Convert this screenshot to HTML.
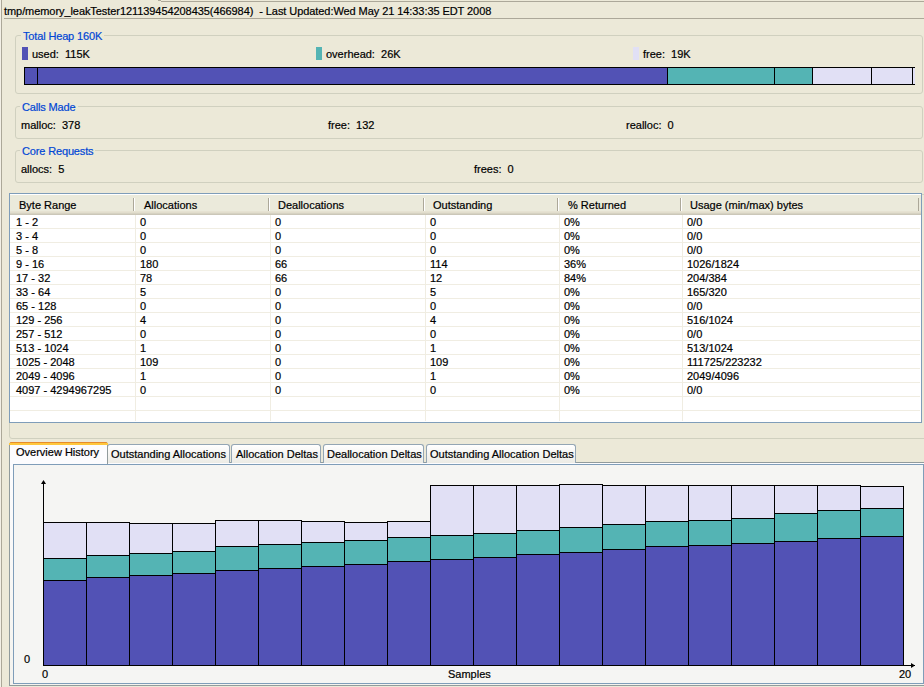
<!DOCTYPE html>
<html><head><meta charset="utf-8"><style>
html,body{margin:0;padding:0}
body{width:924px;height:687px;overflow:hidden;position:relative;background:#ECE9D8;font-family:"Liberation Sans",sans-serif;font-size:11px;color:#000}
div,span,svg{position:absolute}
.t{white-space:pre;line-height:13px;-webkit-text-stroke:0.2px currentColor}
.gb{border:1px solid #D0D0BF;border-radius:3px}
.gt{color:#0046D5;background:#ECE9D8;padding:0 2px;margin-left:-2px;letter-spacing:-0.15px}
</style></head><body>
<div style="left:0px;top:0px;width:1px;height:687px;background:#F3F0E6"></div><div style="left:1px;top:0px;width:1px;height:687px;background:#ACA899"></div><div style="left:158px;top:0px;width:3px;height:1px;background:#ACA899"></div><div style="left:161px;top:1px;width:763px;height:1px;background:#ACA899"></div><span class="t" style="left:4px;top:5px;letter-spacing:-0.07px">tmp/memory_leakTester121139454208435(466984)&nbsp; - Last Updated:Wed May 21 14:33:35 EDT 2008</span><div style="left:4px;top:18px;width:920px;height:1px;background:#ACA899"></div><div class="gb" style="left:15px;top:35px;width:906px;height:57px"></div><span class="t gt" style="left:23px;top:30px">Total Heap 160K</span><div style="left:22px;top:47px;width:6px;height:13px;background:#5252B5"></div><span class="t" style="left:32px;top:48px;">used:&nbsp; 115K</span><div style="left:316px;top:47px;width:6px;height:13px;background:#54B4B4"></div><span class="t" style="left:326px;top:48px;">overhead:&nbsp; 26K</span><div style="left:633px;top:47px;width:6px;height:13px;background:#E1E0F5"></div><span class="t" style="left:643px;top:48px;">free:&nbsp; 19K</span><div style="left:24px;top:67px;width:890px;height:16px;border:1px solid #000;border-right:none;background:#E1E0F5"></div><div style="left:25px;top:68px;width:642px;height:16px;background:#5252B5"></div><div style="left:668px;top:68px;width:144px;height:16px;background:#54B4B4"></div><div style="left:37px;top:67px;width:1px;height:18px;background:#000"></div><div style="left:667px;top:67px;width:1px;height:18px;background:#000"></div><div style="left:774px;top:67px;width:1px;height:18px;background:#000"></div><div style="left:812px;top:67px;width:1px;height:18px;background:#000"></div><div style="left:871px;top:67px;width:1px;height:18px;background:#000"></div><div style="left:912px;top:67px;width:1px;height:18px;background:#000"></div><div class="gb" style="left:15px;top:106px;width:906px;height:31px"></div><span class="t gt" style="left:22px;top:101px">Calls Made</span><span class="t" style="left:21px;top:119px;">malloc:&nbsp; 378</span><span class="t" style="left:328px;top:119px;">free:&nbsp; 132</span><span class="t" style="left:626px;top:119px;">realloc:&nbsp; 0</span><div class="gb" style="left:15px;top:150px;width:906px;height:31px"></div><span class="t gt" style="left:22px;top:145px">Core Requests</span><span class="t" style="left:21px;top:163px;">allocs:&nbsp; 5</span><span class="t" style="left:474px;top:163px;">frees:&nbsp; 0</span><div class="gb" style="left:9px;top:194px;width:940px;height:243px"></div><div style="left:9px;top:193px;width:911px;height:228px;border:1px solid #7F9DB9;background:#fff"></div><div style="left:10px;top:194px;width:911px;height:1px;background:#fff"></div><div style="left:10px;top:195px;width:911px;height:16px;background:#EBEADB"></div><div style="left:10px;top:211px;width:911px;height:1px;background:#E6E2D2"></div><div style="left:10px;top:212px;width:911px;height:1px;background:#E2DECD"></div><div style="left:10px;top:213px;width:911px;height:1px;background:#D6D2C2"></div><div style="left:10px;top:214px;width:911px;height:1px;background:#CBC7B8"></div><span class="t" style="left:19px;top:199px;">Byte Range</span><div style="left:133px;top:198px;width:1px;height:13px;background:#ACA899"></div><div style="left:134px;top:198px;width:1px;height:13px;background:#fff"></div><div style="left:135px;top:215px;width:1px;height:206px;background:#F0EDE2"></div><span class="t" style="left:144px;top:199px;">Allocations</span><div style="left:268px;top:198px;width:1px;height:13px;background:#ACA899"></div><div style="left:269px;top:198px;width:1px;height:13px;background:#fff"></div><div style="left:270px;top:215px;width:1px;height:206px;background:#F0EDE2"></div><span class="t" style="left:278px;top:199px;">Deallocations</span><div style="left:423px;top:198px;width:1px;height:13px;background:#ACA899"></div><div style="left:424px;top:198px;width:1px;height:13px;background:#fff"></div><div style="left:425px;top:215px;width:1px;height:206px;background:#F0EDE2"></div><span class="t" style="left:433px;top:199px;">Outstanding</span><div style="left:557px;top:198px;width:1px;height:13px;background:#ACA899"></div><div style="left:558px;top:198px;width:1px;height:13px;background:#fff"></div><div style="left:559px;top:215px;width:1px;height:206px;background:#F0EDE2"></div><span class="t" style="left:568px;top:199px;">% Returned</span><div style="left:680px;top:198px;width:1px;height:13px;background:#ACA899"></div><div style="left:681px;top:198px;width:1px;height:13px;background:#fff"></div><div style="left:682px;top:215px;width:1px;height:206px;background:#F0EDE2"></div><span class="t" style="left:690px;top:199px;">Usage (min/max) bytes</span><div style="left:918px;top:198px;width:1px;height:13px;background:#ACA899"></div><div style="left:10px;top:228px;width:910px;height:1px;background:#F0EDE2"></div><div style="left:10px;top:242px;width:910px;height:1px;background:#F0EDE2"></div><div style="left:10px;top:256px;width:910px;height:1px;background:#F0EDE2"></div><div style="left:10px;top:270px;width:910px;height:1px;background:#F0EDE2"></div><div style="left:10px;top:284px;width:910px;height:1px;background:#F0EDE2"></div><div style="left:10px;top:298px;width:910px;height:1px;background:#F0EDE2"></div><div style="left:10px;top:312px;width:910px;height:1px;background:#F0EDE2"></div><div style="left:10px;top:326px;width:910px;height:1px;background:#F0EDE2"></div><div style="left:10px;top:340px;width:910px;height:1px;background:#F0EDE2"></div><div style="left:10px;top:354px;width:910px;height:1px;background:#F0EDE2"></div><div style="left:10px;top:368px;width:910px;height:1px;background:#F0EDE2"></div><div style="left:10px;top:382px;width:910px;height:1px;background:#F0EDE2"></div><div style="left:10px;top:396px;width:910px;height:1px;background:#F0EDE2"></div><div style="left:10px;top:410px;width:910px;height:1px;background:#F0EDE2"></div><span class="t" style="left:16px;top:216px;">1 - 2</span><span class="t" style="left:140px;top:216px;">0</span><span class="t" style="left:275px;top:216px;">0</span><span class="t" style="left:430px;top:216px;">0</span><span class="t" style="left:564px;top:216px;">0%</span><span class="t" style="left:687px;top:216px;">0/0</span><span class="t" style="left:16px;top:230px;">3 - 4</span><span class="t" style="left:140px;top:230px;">0</span><span class="t" style="left:275px;top:230px;">0</span><span class="t" style="left:430px;top:230px;">0</span><span class="t" style="left:564px;top:230px;">0%</span><span class="t" style="left:687px;top:230px;">0/0</span><span class="t" style="left:16px;top:244px;">5 - 8</span><span class="t" style="left:140px;top:244px;">0</span><span class="t" style="left:275px;top:244px;">0</span><span class="t" style="left:430px;top:244px;">0</span><span class="t" style="left:564px;top:244px;">0%</span><span class="t" style="left:687px;top:244px;">0/0</span><span class="t" style="left:16px;top:258px;">9 - 16</span><span class="t" style="left:140px;top:258px;">180</span><span class="t" style="left:275px;top:258px;">66</span><span class="t" style="left:430px;top:258px;">114</span><span class="t" style="left:564px;top:258px;">36%</span><span class="t" style="left:687px;top:258px;">1026/1824</span><span class="t" style="left:16px;top:272px;">17 - 32</span><span class="t" style="left:140px;top:272px;">78</span><span class="t" style="left:275px;top:272px;">66</span><span class="t" style="left:430px;top:272px;">12</span><span class="t" style="left:564px;top:272px;">84%</span><span class="t" style="left:687px;top:272px;">204/384</span><span class="t" style="left:16px;top:286px;">33 - 64</span><span class="t" style="left:140px;top:286px;">5</span><span class="t" style="left:275px;top:286px;">0</span><span class="t" style="left:430px;top:286px;">5</span><span class="t" style="left:564px;top:286px;">0%</span><span class="t" style="left:687px;top:286px;">165/320</span><span class="t" style="left:16px;top:300px;">65 - 128</span><span class="t" style="left:140px;top:300px;">0</span><span class="t" style="left:275px;top:300px;">0</span><span class="t" style="left:430px;top:300px;">0</span><span class="t" style="left:564px;top:300px;">0%</span><span class="t" style="left:687px;top:300px;">0/0</span><span class="t" style="left:16px;top:314px;">129 - 256</span><span class="t" style="left:140px;top:314px;">4</span><span class="t" style="left:275px;top:314px;">0</span><span class="t" style="left:430px;top:314px;">4</span><span class="t" style="left:564px;top:314px;">0%</span><span class="t" style="left:687px;top:314px;">516/1024</span><span class="t" style="left:16px;top:328px;">257 - 512</span><span class="t" style="left:140px;top:328px;">0</span><span class="t" style="left:275px;top:328px;">0</span><span class="t" style="left:430px;top:328px;">0</span><span class="t" style="left:564px;top:328px;">0%</span><span class="t" style="left:687px;top:328px;">0/0</span><span class="t" style="left:16px;top:342px;">513 - 1024</span><span class="t" style="left:140px;top:342px;">1</span><span class="t" style="left:275px;top:342px;">0</span><span class="t" style="left:430px;top:342px;">1</span><span class="t" style="left:564px;top:342px;">0%</span><span class="t" style="left:687px;top:342px;">513/1024</span><span class="t" style="left:16px;top:356px;">1025 - 2048</span><span class="t" style="left:140px;top:356px;">109</span><span class="t" style="left:275px;top:356px;">0</span><span class="t" style="left:430px;top:356px;">109</span><span class="t" style="left:564px;top:356px;">0%</span><span class="t" style="left:687px;top:356px;">111725/223232</span><span class="t" style="left:16px;top:370px;">2049 - 4096</span><span class="t" style="left:140px;top:370px;">1</span><span class="t" style="left:275px;top:370px;">0</span><span class="t" style="left:430px;top:370px;">1</span><span class="t" style="left:564px;top:370px;">0%</span><span class="t" style="left:687px;top:370px;">2049/4096</span><span class="t" style="left:16px;top:384px;">4097 - 4294967295</span><span class="t" style="left:140px;top:384px;">0</span><span class="t" style="left:275px;top:384px;">0</span><span class="t" style="left:430px;top:384px;">0</span><span class="t" style="left:564px;top:384px;">0%</span><span class="t" style="left:687px;top:384px;">0/0</span><div style="left:9px;top:462px;width:920px;height:222px;border:1px solid #919B9C;background:linear-gradient(#FCFCFE,#F4F3EE)"></div><div style="left:107px;top:444px;width:121px;height:18px;border:1px solid #94A6B4;border-bottom:none;border-radius:3px 3px 0 0;background:linear-gradient(#FFFFFF,#ECEBE5)"></div><span class="t" style="left:111px;top:448px;">Outstanding Allocations</span><div style="left:231px;top:444px;width:88px;height:18px;border:1px solid #94A6B4;border-bottom:none;border-radius:3px 3px 0 0;background:linear-gradient(#FFFFFF,#ECEBE5)"></div><span class="t" style="left:236px;top:448px;">Allocation Deltas</span><div style="left:323px;top:444px;width:99px;height:18px;border:1px solid #94A6B4;border-bottom:none;border-radius:3px 3px 0 0;background:linear-gradient(#FFFFFF,#ECEBE5)"></div><span class="t" style="left:327px;top:448px;">Deallocation Deltas</span><div style="left:426px;top:444px;width:148px;height:18px;border:1px solid #94A6B4;border-bottom:none;border-radius:3px 3px 0 0;background:linear-gradient(#FFFFFF,#ECEBE5)"></div><span class="t" style="left:430px;top:448px;">Outstanding Allocation Deltas</span><div style="left:9px;top:442px;width:97px;height:21px;border:1px solid #919B9C;border-bottom:none;border-radius:3px 3px 0 0;background:#FCFCFE"></div><div style="left:10px;top:442px;width:97px;height:1px;background:#E68B2C;border-radius:2px 2px 0 0"></div><div style="left:9px;top:443px;width:99px;height:2px;background:#FFC73C"></div><span class="t" style="left:16px;top:446px;">Overview History</span><div style="left:13px;top:464px;width:909px;height:218px;border:1px solid #7F9DB9;background:#F5F5F3"></div><div style="left:43px;top:522px;width:44px;height:37px;background:#E1E0F5;border:1px solid #000;box-sizing:border-box"></div><div style="left:86px;top:522px;width:44px;height:34px;background:#E1E0F5;border:1px solid #000;box-sizing:border-box"></div><div style="left:129px;top:523px;width:44px;height:31px;background:#E1E0F5;border:1px solid #000;box-sizing:border-box"></div><div style="left:172px;top:523px;width:44px;height:29px;background:#E1E0F5;border:1px solid #000;box-sizing:border-box"></div><div style="left:215px;top:520px;width:44px;height:27px;background:#E1E0F5;border:1px solid #000;box-sizing:border-box"></div><div style="left:258px;top:520px;width:44px;height:25px;background:#E1E0F5;border:1px solid #000;box-sizing:border-box"></div><div style="left:301px;top:521px;width:44px;height:22px;background:#E1E0F5;border:1px solid #000;box-sizing:border-box"></div><div style="left:344px;top:522px;width:44px;height:19px;background:#E1E0F5;border:1px solid #000;box-sizing:border-box"></div><div style="left:387px;top:521px;width:44px;height:17px;background:#E1E0F5;border:1px solid #000;box-sizing:border-box"></div><div style="left:430px;top:485px;width:44px;height:51px;background:#E1E0F5;border:1px solid #000;box-sizing:border-box"></div><div style="left:473px;top:485px;width:44px;height:49px;background:#E1E0F5;border:1px solid #000;box-sizing:border-box"></div><div style="left:516px;top:485px;width:44px;height:46px;background:#E1E0F5;border:1px solid #000;box-sizing:border-box"></div><div style="left:559px;top:484px;width:44px;height:44px;background:#E1E0F5;border:1px solid #000;box-sizing:border-box"></div><div style="left:602px;top:485px;width:44px;height:40px;background:#E1E0F5;border:1px solid #000;box-sizing:border-box"></div><div style="left:645px;top:485px;width:44px;height:37px;background:#E1E0F5;border:1px solid #000;box-sizing:border-box"></div><div style="left:688px;top:485px;width:44px;height:36px;background:#E1E0F5;border:1px solid #000;box-sizing:border-box"></div><div style="left:731px;top:485px;width:44px;height:34px;background:#E1E0F5;border:1px solid #000;box-sizing:border-box"></div><div style="left:774px;top:485px;width:44px;height:29px;background:#E1E0F5;border:1px solid #000;box-sizing:border-box"></div><div style="left:817px;top:485px;width:44px;height:26px;background:#E1E0F5;border:1px solid #000;box-sizing:border-box"></div><div style="left:860px;top:486px;width:44px;height:23px;background:#E1E0F5;border:1px solid #000;box-sizing:border-box"></div><div style="left:43px;top:558px;width:44px;height:23px;background:#54B4B4;border:1px solid #000;box-sizing:border-box"></div><div style="left:86px;top:555px;width:44px;height:23px;background:#54B4B4;border:1px solid #000;box-sizing:border-box"></div><div style="left:129px;top:553px;width:44px;height:23px;background:#54B4B4;border:1px solid #000;box-sizing:border-box"></div><div style="left:172px;top:551px;width:44px;height:23px;background:#54B4B4;border:1px solid #000;box-sizing:border-box"></div><div style="left:215px;top:546px;width:44px;height:25px;background:#54B4B4;border:1px solid #000;box-sizing:border-box"></div><div style="left:258px;top:544px;width:44px;height:25px;background:#54B4B4;border:1px solid #000;box-sizing:border-box"></div><div style="left:301px;top:542px;width:44px;height:25px;background:#54B4B4;border:1px solid #000;box-sizing:border-box"></div><div style="left:344px;top:540px;width:44px;height:25px;background:#54B4B4;border:1px solid #000;box-sizing:border-box"></div><div style="left:387px;top:537px;width:44px;height:25px;background:#54B4B4;border:1px solid #000;box-sizing:border-box"></div><div style="left:430px;top:535px;width:44px;height:25px;background:#54B4B4;border:1px solid #000;box-sizing:border-box"></div><div style="left:473px;top:533px;width:44px;height:25px;background:#54B4B4;border:1px solid #000;box-sizing:border-box"></div><div style="left:516px;top:530px;width:44px;height:25px;background:#54B4B4;border:1px solid #000;box-sizing:border-box"></div><div style="left:559px;top:527px;width:44px;height:26px;background:#54B4B4;border:1px solid #000;box-sizing:border-box"></div><div style="left:602px;top:524px;width:44px;height:26px;background:#54B4B4;border:1px solid #000;box-sizing:border-box"></div><div style="left:645px;top:521px;width:44px;height:26px;background:#54B4B4;border:1px solid #000;box-sizing:border-box"></div><div style="left:688px;top:520px;width:44px;height:26px;background:#54B4B4;border:1px solid #000;box-sizing:border-box"></div><div style="left:731px;top:518px;width:44px;height:26px;background:#54B4B4;border:1px solid #000;box-sizing:border-box"></div><div style="left:774px;top:513px;width:44px;height:29px;background:#54B4B4;border:1px solid #000;box-sizing:border-box"></div><div style="left:817px;top:510px;width:44px;height:29px;background:#54B4B4;border:1px solid #000;box-sizing:border-box"></div><div style="left:860px;top:508px;width:44px;height:29px;background:#54B4B4;border:1px solid #000;box-sizing:border-box"></div><div style="left:43px;top:580px;width:44px;height:86px;background:#5252B5;border:1px solid #000;box-sizing:border-box"></div><div style="left:86px;top:577px;width:44px;height:89px;background:#5252B5;border:1px solid #000;box-sizing:border-box"></div><div style="left:129px;top:575px;width:44px;height:91px;background:#5252B5;border:1px solid #000;box-sizing:border-box"></div><div style="left:172px;top:573px;width:44px;height:93px;background:#5252B5;border:1px solid #000;box-sizing:border-box"></div><div style="left:215px;top:570px;width:44px;height:96px;background:#5252B5;border:1px solid #000;box-sizing:border-box"></div><div style="left:258px;top:568px;width:44px;height:98px;background:#5252B5;border:1px solid #000;box-sizing:border-box"></div><div style="left:301px;top:566px;width:44px;height:100px;background:#5252B5;border:1px solid #000;box-sizing:border-box"></div><div style="left:344px;top:564px;width:44px;height:102px;background:#5252B5;border:1px solid #000;box-sizing:border-box"></div><div style="left:387px;top:561px;width:44px;height:105px;background:#5252B5;border:1px solid #000;box-sizing:border-box"></div><div style="left:430px;top:559px;width:44px;height:107px;background:#5252B5;border:1px solid #000;box-sizing:border-box"></div><div style="left:473px;top:557px;width:44px;height:109px;background:#5252B5;border:1px solid #000;box-sizing:border-box"></div><div style="left:516px;top:554px;width:44px;height:112px;background:#5252B5;border:1px solid #000;box-sizing:border-box"></div><div style="left:559px;top:552px;width:44px;height:114px;background:#5252B5;border:1px solid #000;box-sizing:border-box"></div><div style="left:602px;top:549px;width:44px;height:117px;background:#5252B5;border:1px solid #000;box-sizing:border-box"></div><div style="left:645px;top:546px;width:44px;height:120px;background:#5252B5;border:1px solid #000;box-sizing:border-box"></div><div style="left:688px;top:545px;width:44px;height:121px;background:#5252B5;border:1px solid #000;box-sizing:border-box"></div><div style="left:731px;top:543px;width:44px;height:123px;background:#5252B5;border:1px solid #000;box-sizing:border-box"></div><div style="left:774px;top:541px;width:44px;height:125px;background:#5252B5;border:1px solid #000;box-sizing:border-box"></div><div style="left:817px;top:538px;width:44px;height:128px;background:#5252B5;border:1px solid #000;box-sizing:border-box"></div><div style="left:860px;top:536px;width:44px;height:130px;background:#5252B5;border:1px solid #000;box-sizing:border-box"></div><div style="left:43px;top:482px;width:1px;height:184px;background:#000"></div><div style="left:43px;top:665px;width:872px;height:1px;background:#000"></div><svg style="position:absolute;left:0;top:0" width="924" height="687"><path d="M41 484 L43.5 480 L46 484 Z" fill="#000"/><path d="M911 663 L915 665.5 L911 668 Z" fill="#000"/></svg><span class="t" style="left:24px;top:653px;">0</span><span class="t" style="left:42px;top:668px;">0</span><span class="t" style="left:448px;top:668px;">Samples</span><span class="t" style="left:899px;top:668px;">20</span>
</body></html>
